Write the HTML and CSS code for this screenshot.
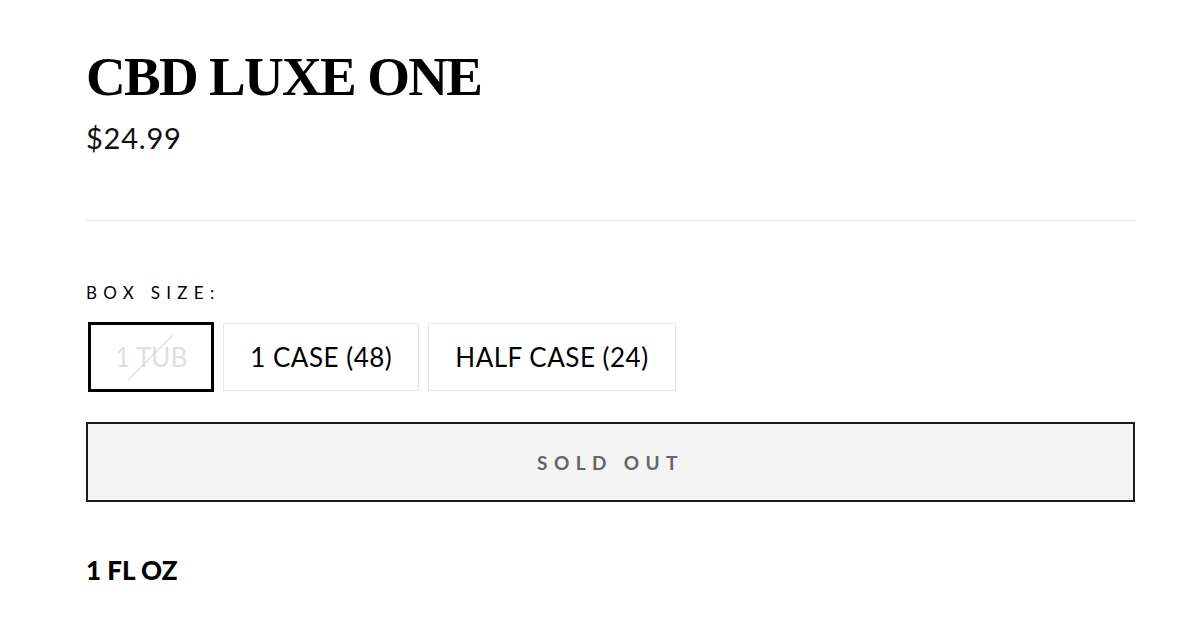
FILE: index.html
```html
<!DOCTYPE html>
<html>
<head>
<meta charset="utf-8">
<link rel="stylesheet" href="styles.css">
</head>
<body>
<main class="product">
  <h1 class="title">CBD LUXE ONE</h1>
  <div class="price">$24.99</div>
  <hr class="divider">
  <div class="variant-label">BOX SIZE:</div>
  <div class="variants">
    <button class="variant selected disabled"><span>1 TUB</span></button>
    <button class="variant">1 CASE (48)</button>
    <button class="variant">HALF CASE (24)</button>
  </div>
  <button class="sold-out">SOLD OUT</button>
  <div class="size">1 FL OZ</div>
</main>
</body>
</html>
```

FILE: styles.css
```css
html, body {
  margin: 0;
  padding: 0;
  background: #fff;
}
.product {
  width: 1049px;
  padding: 0 0 0 86px;
  color: #000;
  font-family: Lato, "Open Sans", sans-serif;
  display: flex;
  flex-direction: column;
  align-items: flex-start;
}
.title {
  margin: 45px 0 0;
  font-family: "Liberation Serif", "Times New Roman", serif;
  font-weight: 700;
  font-size: 55px;
  line-height: 64px;
  letter-spacing: -1.7px;
}
.price {
  margin-top: 11px;
  font-size: 29px;
  font-weight: 400;
  line-height: 36px;
  letter-spacing: 0.8px;
  color: #111;
}
.divider {
  align-self: stretch;
  margin: 64px 0 0;
  border: 0;
  border-top: 1px solid #e8e8e1;
  height: 0;
}
.variant-label {
  margin-top: 62px;
  font-size: 17px;
  letter-spacing: 6.3px;
  line-height: 20px;
}
.variants {
  display: flex;
  gap: 9px;
  margin-top: 20px;
}
.variant {
  position: relative;
  height: 68px;
  padding: 0 26px;
  border: 1px solid #e8e8e1;
  background: #fff;
  font-family: Lato, "Open Sans", sans-serif;
  font-size: 26px;
  letter-spacing: 0.5px;
  color: #000;
  display: flex;
  align-items: center;
}
.variant.selected {
  border: 3px solid #000;
  margin-left: 2px;
  height: 70px;
  margin-top: -1px;
  padding: 0 24px;
  letter-spacing: 0;
}
.variant.disabled {
  color: #e0e0dc;
}
.variant.disabled::after {
  content: "";
  position: absolute;
  left: 50%;
  top: 50%;
  width: 64px;
  height: 1px;
  background: #dcdcd6;
  transform: translate(-50%, -50%) rotate(-45deg);
}
.sold-out {
  align-self: stretch;
  margin-top: 30px;
  height: 80px;
  border: 2px solid #1c1c1c;
  background: #f4f4f4;
  color: #666;
  font-family: Lato, "Open Sans", sans-serif;
  font-weight: 700;
  font-size: 19px;
  letter-spacing: 6.4px;
  padding-left: 6px;
}
.size {
  margin-top: 53px;
  font-size: 26px;
  font-weight: 900;
  line-height: 30px;
}
```
